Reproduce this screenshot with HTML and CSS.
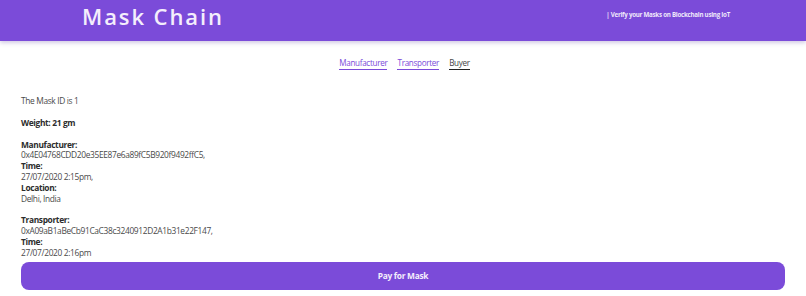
FILE: index.html
```html
<!DOCTYPE html>
<html>
<head>
<meta charset="utf-8">
<link rel="stylesheet" href="styles.css">
</head>
<body>
<header class="topbar">
  <div class="brand">Mask Chain</div>
  <div class="tagline">| Verify your Masks on Blockchain using IoT</div>
</header>
<nav class="tabs">
  <a class="tab done">Manufacturer</a>
  <a class="tab done">Transporter</a>
  <a class="tab active">Buyer</a>
</nav>
<main class="details">
  <p class="line">The Mask ID is 1</p>
  <p class="line bold">Weight: 21 gm</p>
  <div class="block">
    <div class="bold">Manufacturer:</div>
    <div>0x4E04768CDD20e35EE87e6a89fC5B920f9492ffC5,</div>
    <div class="bold">Time:</div>
    <div>27/07/2020 2:15pm,</div>
    <div class="bold">Location:</div>
    <div>Delhi, India</div>
  </div>
  <div class="block">
    <div class="bold">Transporter:</div>
    <div>0xA09aB1aBeCb91CaC38c3240912D2A1b31e22F147,</div>
    <div class="bold">Time:</div>
    <div>27/07/2020 2:16pm</div>
  </div>
  <button class="pay">Pay for Mask</button>
</main>
</body>
</html>
```
FILE: styles.css
```css
* { box-sizing: border-box; }
html, body { margin: 0; padding: 0; background: #fff; }
body {
  font-family: "Open Sans", "Noto Sans", sans-serif;
  color: #4a4a4a;
  width: 806px;
  height: 296px;
  overflow: hidden;
}
.topbar {
  height: 41px;
  background: #7b4bd9;
  box-shadow: 0 2px 4px rgba(80, 50, 150, 0.25);
  display: flex;
  align-items: flex-start;
  position: relative;
}
.brand {
  margin-left: 82px;
  margin-top: 2px;
  font-size: 22px;
  line-height: 28px;
  letter-spacing: 1.9px;
  color: #f4eefc;
  font-weight: 600;
}
.tagline {
  margin-left: auto;
  margin-right: 76px;
  margin-top: 10px;
  font-size: 6.2px;
  line-height: 10px;
  letter-spacing: -0.25px;
  font-weight: 700;
  color: #efe8fb;
}
.tabs {
  display: flex;
  justify-content: center;
  gap: 10px;
  margin-top: 16px;
  padding-left: 3px;
}
.tab {
  font-size: 8.1px;
  line-height: 11px;
  letter-spacing: -0.3px;
  padding-bottom: 1px;
  border-bottom: 1.5px solid #222;
  color: #444;
  cursor: pointer;
}
.tab.done {
  color: #7b4bd9;
  border-bottom-color: #7b4bd9;
}
.details {
  padding: 0 21px;
  font-size: 8.4px;
  line-height: 10.8px;
  letter-spacing: -0.35px;
  margin-top: 26px;
}
.line { margin: 0 0 11px; }
.bold { font-weight: 700; color: #2c2c2c; }
.block { margin-bottom: 11px; }
.block:last-of-type { margin-bottom: 0; }
.pay {
  display: block;
  width: 100%;
  height: 28px;
  margin-top: 3px;
  border: none;
  border-radius: 8px;
  background: #7b4bd9;
  color: #f4eefc;
  font-family: "Open Sans", "Noto Sans", sans-serif;
  font-size: 8.4px;
  letter-spacing: -0.3px;
  font-weight: 700;
}
```
